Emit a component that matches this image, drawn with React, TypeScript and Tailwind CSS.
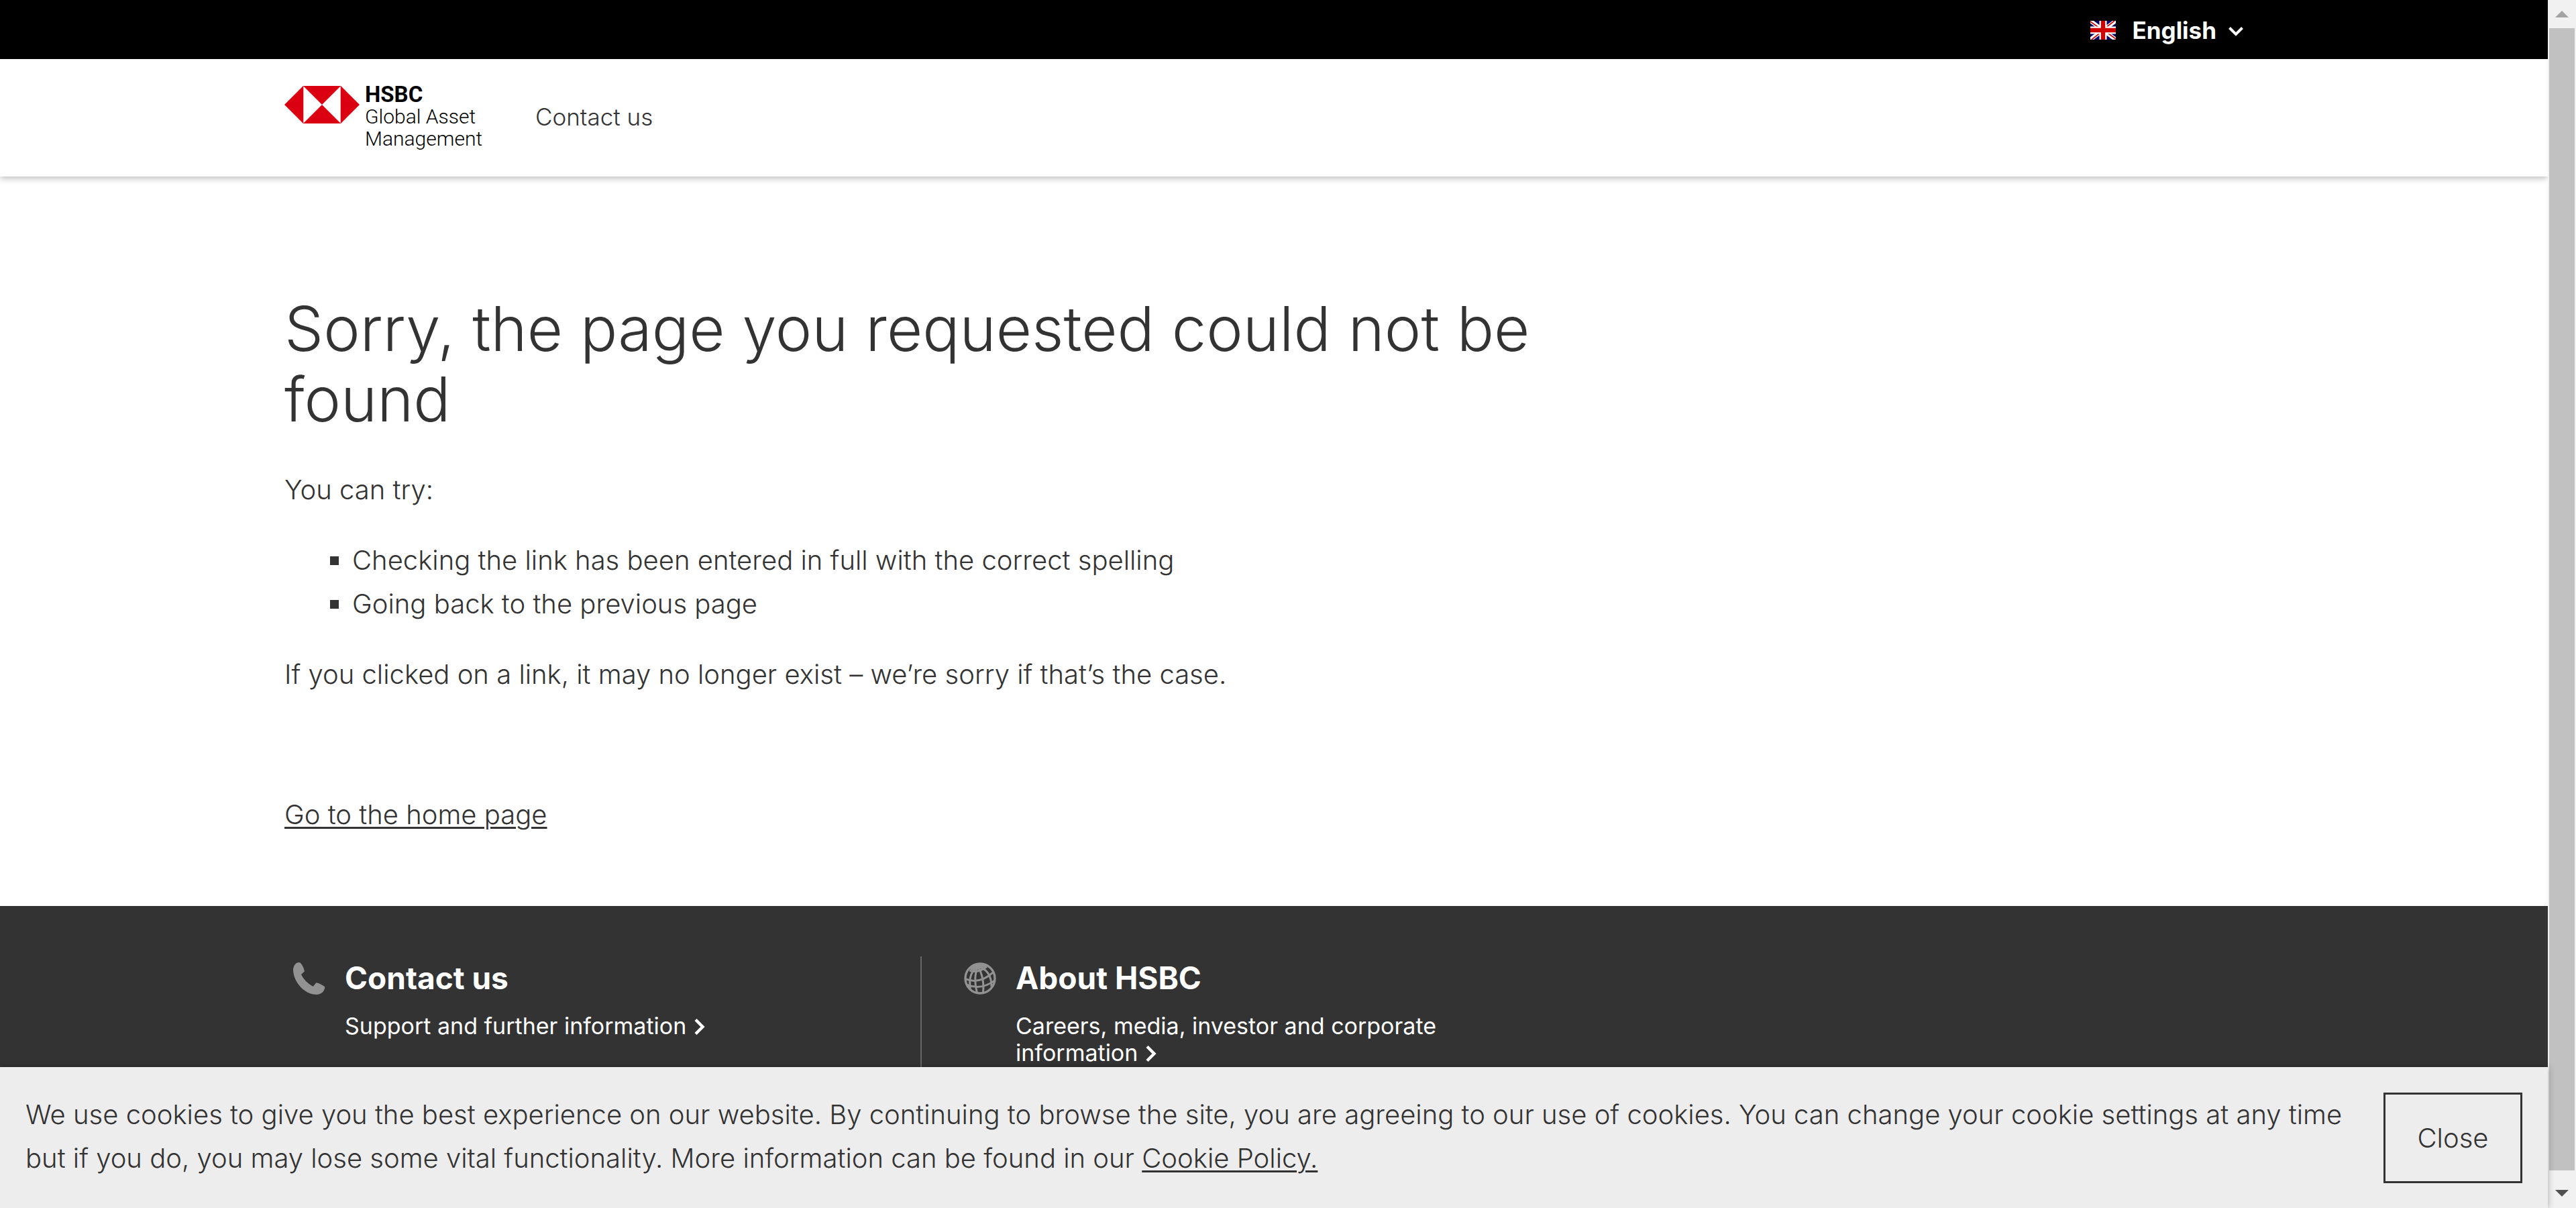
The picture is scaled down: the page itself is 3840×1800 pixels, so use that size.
import type { ReactNode } from 'react'

function UnionFlag() {
  return (
    <svg className="h-7 w-[38px]" viewBox="0 0 38 28" aria-hidden="true">
      <rect width="38" height="28" fill="#006" />
      <path d="M0 0L38 28M38 0L0 28" stroke="#fff" strokeWidth="6" />
      <path d="M0 1L17 13.5M38 27L21 14.5M36 0L20 12.5M2 28L18 15.5" stroke="#c00" strokeWidth="1.6" />
      <path d="M19 0V28M0 14H38" stroke="#fff" strokeWidth="11" />
      <path d="M19 0V28M0 14H38" stroke="#c00" strokeWidth="6.4" />
    </svg>
  )
}

function HexagonLogo() {
  return (
    <svg className="h-14 w-28" viewBox="0 0 112 56" aria-hidden="true">
      <rect x="28" width="56" height="56" fill="#fff" stroke="#db0011" strokeWidth="0.6" />
      <path d="M28 0H84L28 56H84ZM28 0V56L0 28ZM84 0L112 28L84 56Z" fill="#db0011" />
    </svg>
  )
}

function ChevronDown() {
  return (
    <svg className="h-4 w-[22px]" viewBox="0 0 22 16" fill="none" stroke="#fff" strokeWidth="4" aria-hidden="true">
      <path d="M1.5 2.5L11 12L20.5 2.5" />
    </svg>
  )
}

function ChevronRight() {
  return (
    <svg className="ml-3 inline-block h-6 w-4 align-[-1px]" viewBox="0 0 16 24" fill="none" stroke="#fff" strokeWidth="4.4" aria-hidden="true">
      <path d="M2 1.5L12.5 12L2 22.5" />
    </svg>
  )
}

function PhoneIcon() {
  return (
    <svg className="size-12" viewBox="0 0 48 48" fill="#929292" aria-hidden="true">
      <path d="M8 0C3 .5 0 6 0 12C1 30 17 48 35 48C42 48 47 43 47.3 36.5Q41 31.5 34.3 30.3L29.7 36Q17 29 12 18L17 13.3Q15 5 10.5 .6Q9.5 0 8 0Z" />
    </svg>
  )
}

function GlobeIcon() {
  return (
    <svg className="size-12" viewBox="35 42 144 144" fill="none" stroke="#929292" strokeWidth="9" aria-hidden="true">
      <circle cx="107" cy="114" r="66" strokeWidth="10" />
      <path d="M97 62C72 76 56 108 63 160M97 62C82 94 82 134 94 180M97 62C116 90 126 134 120 180M97 62C138 68 158 104 158 150" />
      <path d="M60 78Q98 92 138 60M41 116Q104 142 166 86M48 142Q112 168 174 122" />
      <path d="M68 66Q92 48 130 60Q100 62 68 72Z" fill="#929292" />
    </svg>
  )
}

function FooterItem({ icon, title, text, divided }: { icon: ReactNode; title: string; text: string; divided?: boolean }) {
  return (
    <section className={divided ? 'flex flex-1 gap-[29px] border-l-2 border-[#666] pl-[63px]' : 'flex w-[948px] gap-[29px] pl-[13px]'}>
      <div className="shrink-0 pt-[9px]">{icon}</div>
      <div className="max-w-[700px]">
        <h2 className="mb-[22px] pt-0.5 text-[46px] leading-[60px] font-bold">{title}</h2>
        <a href="#" className="block text-[34px] leading-10">
          {text}
          <ChevronRight />
        </a>
      </div>
    </section>
  )
}

function ScrollBar() {
  return (
    <div className="flex w-[42px] shrink-0 flex-col bg-[#f1f1f1]" aria-hidden="true">
      <div className="flex h-[42px] items-center justify-center">
        <svg className="h-2.5 w-5" viewBox="0 0 20 10"><path d="M10 0L20 10H0Z" fill="#a3a3a3" /></svg>
      </div>
      <div className="mx-0.5 flex-1 bg-[#c1c1c1]" />
      <div className="flex h-14 items-end justify-center pb-[17px]">
        <svg className="h-2.5 w-5" viewBox="0 0 20 10"><path d="M0 0H20L10 10Z" fill="#505050" /></svg>
      </div>
    </div>
  )
}

export default function App() {
  return (
    <div className="flex h-screen bg-white font-['Inter','Liberation_Sans',sans-serif] text-[#333]">
      <div className="flex min-w-0 flex-1 flex-col">
        <div className="flex min-h-0 flex-1 flex-col overflow-hidden">
          <div className="shrink-0 bg-black">
            <div className="mx-auto flex h-[88px] max-w-[2950px] items-center justify-end pt-0.5 pr-[30px] text-white">
              <button type="button" className="flex items-center text-[35px] leading-10 font-bold">
                <UnionFlag />
                <span className="ml-6">English</span>
                <span className="ml-[18px] pt-1"><ChevronDown /></span>
              </button>
            </div>
          </div>

          <header className="relative shrink-0 shadow-[0_2px_10px_rgba(0,0,0,0.3)]">
            <div className="mx-auto flex h-[175px] max-w-[2950px] items-start">
              <a href="#" className="flex gap-2 pt-10 text-black" aria-label="HSBC Global Asset Management">
                <HexagonLogo />
                <span className="-mt-1 flex w-[180px] flex-col font-['Roboto','Liberation_Sans',sans-serif] text-[30px] leading-[33px] font-light">
                  <strong className="text-[33px] leading-[33px] font-bold">HSBC</strong>
                  <span className="whitespace-nowrap">Global Asset</span>
                  <span>Management</span>
                </span>
              </a>
              <nav className="pt-[66px] pl-[74px]">
                <a href="#" className="block text-[35px] leading-10 font-light">Contact us</a>
              </nav>
            </div>
          </header>

          <main className="mx-auto w-full max-w-[2950px] shrink-0 pt-[174px] pb-[104px] text-[40px] leading-[65px] font-light">
            <h1 className="mb-[50px] max-w-[1950px] text-[92px] leading-[105px]">Sorry, the page you requested could not be found</h1>
            <p>You can try:</p>
            <ul className="my-10 pl-[68px]">
              {['Checking the link has been entered in full with the correct spelling', 'Going back to the previous page'].map((t) => (
                <li key={t} className="flex items-center gap-5">
                  <span className="mt-0.5 size-[13px] bg-[#333]" />
                  {t}
                </li>
              ))}
            </ul>
            <p>If you clicked on a link, it may no longer exist – we’re sorry if that’s the case.</p>
            <p className="mt-36">
              <a href="#" className="underline decoration-3 underline-offset-4">Go to the home page</a>
            </p>
          </main>

          <footer className="flex-1 bg-[#333] pt-[75px] text-white">
            <div className="mx-auto flex h-full max-w-[2950px]">
              <FooterItem icon={<PhoneIcon />} title="Contact us" text="Support and further information" />
              <FooterItem icon={<GlobeIcon />} title="About HSBC" text="Careers, media, investor and corporate information" divided />
            </div>
          </footer>
        </div>

        <div className="relative flex shrink-0 items-start gap-8 bg-[#ededed] px-[38px] pt-[38px] pb-[37px] text-[40px] font-light shadow-[0_0_10px_rgba(0,0,0,0.3)]">
          <p className="flex-1 leading-[65px]">
            We use cookies to give you the best experience on our website. By continuing to browse the site, you are agreeing to our use of cookies. You can change your cookie settings at any time but if you do, you may lose some vital functionality. More information can be found in our{' '}
            <a href="#" className="underline decoration-3 underline-offset-4">Cookie Policy.</a>
          </p>
          <button type="button" className="h-[135px] w-[207px] shrink-0 border-3 border-[#333]">Close</button>
        </div>
      </div>
      <ScrollBar />
    </div>
  )
}
